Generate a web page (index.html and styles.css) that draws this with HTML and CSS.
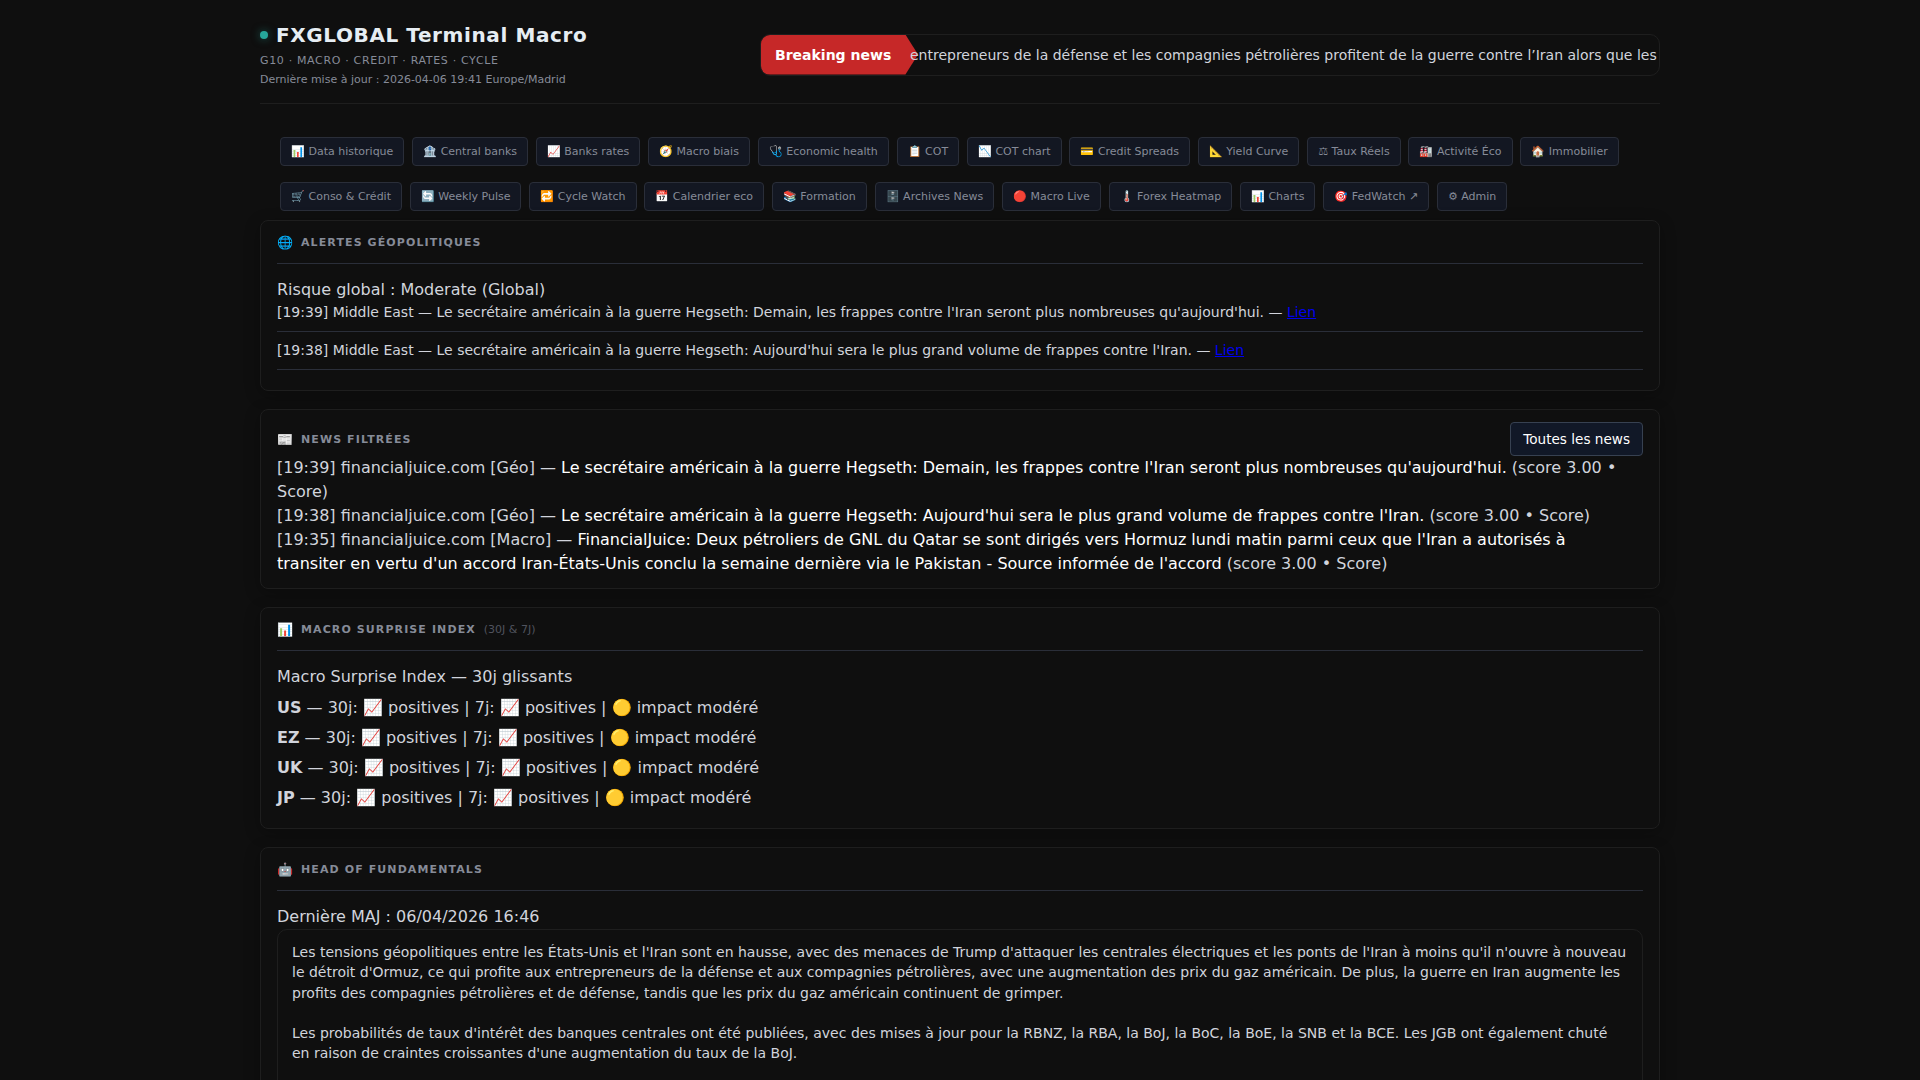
FILE: index.html
```html
<!DOCTYPE html>
<html lang="fr">
<head>
    <meta charset="UTF-8">
    <meta name="viewport" content="width=device-width, initial-scale=1.0">
    <title>FXGLOBAL Terminal Macro</title>
    <link rel="stylesheet" href="styles.css">
</head>
<body>
    <div class="container">
        <header class="header">
            <div class="brand">
                <h1><span class="dot"></span>FXGLOBAL Terminal Macro</h1>
                <p class="subtitle">G10 · MACRO · CREDIT · RATES · CYCLE</p>
                <p class="updated">Dernière mise à jour : 2026-04-06 19:41 Europe/Madrid</p>
            </div>
            <div class="ticker">
                <div class="ticker-label">Breaking news</div>
                <div class="ticker-text">entrepreneurs de la défense et les compagnies pétrolières profitent de la guerre contre l’Iran alors que les</div>
            </div>
        </header>

        <nav class="nav">
            <a href="#">📊 Data historique</a>
            <a href="#">🏦 Central banks</a>
            <a href="#">📈 Banks rates</a>
            <a href="#">🧭 Macro biais</a>
            <a href="#">🩺 Economic health</a>
            <a href="#">📋 COT</a>
            <a href="#">📉 COT chart</a>
            <a href="#">💳 Credit Spreads</a>
            <a href="#">📐 Yield Curve</a>
            <a href="#">⚖ Taux Réels</a>
            <a href="#">🏭 Activité Éco</a>
            <a href="#">🏠 Immobilier</a>
            <a href="#">🛒 Conso &amp; Crédit</a>
            <a href="#">🔄 Weekly Pulse</a>
            <a href="#">🔁 Cycle Watch</a>
            <a href="#">📅 Calendrier eco</a>
            <a href="#">📚 Formation</a>
            <a href="#">🗄️ Archives News</a>
            <a href="#">🔴 Macro Live</a>
            <a href="#">🌡️ Forex Heatmap</a>
            <a href="#">📊 Charts</a>
            <a href="#">🎯 FedWatch ↗</a>
            <a href="#">⚙ Admin</a>
        </nav>

        <main class="cards">
            <section class="card">
                <div class="card-head">
                    <span class="icon">🌐</span>
                    <h2>Alertes géopolitiques</h2>
                </div>
                <p>Risque global : Moderate (Global)</p>
                <ul class="alerts">
                    <li>[19:39] Middle East — Le secrétaire américain à la guerre Hegseth: Demain, les frappes contre l'Iran seront plus nombreuses qu'aujourd'hui. — <a href="#">Lien</a></li>
                    <li>[19:38] Middle East — Le secrétaire américain à la guerre Hegseth: Aujourd'hui sera le plus grand volume de frappes contre l'Iran. — <a href="#">Lien</a></li>
                </ul>
            </section>

            <section class="card">
                <div class="card-head plain">
                    <span class="icon">📰</span>
                    <h2>News filtrées</h2>
                    <button class="btn" type="button">Toutes les news</button>
                </div>
                <ul class="news">
                    <li>[19:39] financialjuice.com [Géo] — <a href="#">Le secrétaire américain à la guerre Hegseth: Demain, les frappes contre l'Iran seront plus nombreuses qu'aujourd'hui.</a> (score 3.00 • Score)</li>
                    <li>[19:38] financialjuice.com [Géo] — <a href="#">Le secrétaire américain à la guerre Hegseth: Aujourd'hui sera le plus grand volume de frappes contre l'Iran.</a> (score 3.00 • Score)</li>
                    <li>[19:35] financialjuice.com [Macro] — <a href="#">FinancialJuice: Deux pétroliers de GNL du Qatar se sont dirigés vers Hormuz lundi matin parmi ceux que l'Iran a autorisés à transiter en vertu d'un accord Iran-États-Unis conclu la semaine dernière via le Pakistan - Source informée de l'accord</a> (score 3.00 • Score)</li>
                </ul>
            </section>

            <section class="card">
                <div class="card-head">
                    <span class="icon">📊</span>
                    <h2>Macro Surprise Index</h2>
                    <span class="period">(30J &amp; 7J)</span>
                </div>
                <p>Macro Surprise Index — 30j glissants</p>
                <ul class="surprise">
                    <li><strong>US</strong> — 30j: 📈 positives | 7j: 📈 positives | 🟡 impact modéré</li>
                    <li><strong>EZ</strong> — 30j: 📈 positives | 7j: 📈 positives | 🟡 impact modéré</li>
                    <li><strong>UK</strong> — 30j: 📈 positives | 7j: 📈 positives | 🟡 impact modéré</li>
                    <li><strong>JP</strong> — 30j: 📈 positives | 7j: 📈 positives | 🟡 impact modéré</li>
                </ul>
            </section>

            <section class="card">
                <div class="card-head">
                    <span class="icon">🤖</span>
                    <h2>Head of Fundamentals</h2>
                </div>
                <p>Dernière MAJ : 06/04/2026 16:46</p>
                <div class="report">
                    <p>Les tensions géopolitiques entre les États-Unis et l'Iran sont en hausse, avec des menaces de Trump d'attaquer les centrales électriques et les ponts de l'Iran à moins qu'il n'ouvre à nouveau le détroit d'Ormuz, ce qui profite aux entrepreneurs de la défense et aux compagnies pétrolières, avec une augmentation des prix du gaz américain. De plus, la guerre en Iran augmente les profits des compagnies pétrolières et de défense, tandis que les prix du gaz américain continuent de grimper.</p>
                    <p>Les probabilités de taux d'intérêt des banques centrales ont été publiées, avec des mises à jour pour la RBNZ, la RBA, la BoJ, la BoC, la BoE, la SNB et la BCE. Les JGB ont également chuté en raison de craintes croissantes d'une augmentation du taux de la BoJ.</p>
                </div>
            </section>
        </main>
    </div>
</body>
</html>
```
FILE: styles.css
```css
* {
    margin: 0;
    padding: 0;
    box-sizing: border-box;
}
body {
    background-color: #0f0f0f;
    color: #d1d4dc;
    font-family: "DejaVu Sans", sans-serif;
    font-size: 16px;
    line-height: 1.5;
}
ul {
    list-style: none;
}
.container {
    max-width: 1440px;
    margin: 0 auto;
    padding: 20px;
}

/* Header */
.header {
    display: flex;
    justify-content: space-between;
    align-items: center;
    padding-bottom: 14px;
    border-bottom: 1px solid #1e1e1e;
}
.header h1 {
    display: flex;
    align-items: center;
    gap: 8px;
    margin-bottom: 1px;
    color: #e6edf3;
    font-size: 20px;
    line-height: 30px;
    letter-spacing: 0.03em;
}
.dot {
    width: 8px;
    height: 8px;
    border-radius: 50%;
    background-color: #26a69a;
    box-shadow: 0 0 8px rgba(38, 166, 154, 0.5);
}
.subtitle,
.updated {
    color: #868b98;
    font-size: 11px;
    line-height: 19px;
}
.subtitle {
    letter-spacing: 0.06em;
}
.ticker {
    display: flex;
    width: 900px;
    height: 42px;
    border: 1px solid #1e1e1e;
    border-radius: 10px;
    overflow: hidden;
    font-size: 14px;
    line-height: 40px;
}
.ticker-label {
    flex: none;
    width: 157px;
    padding-left: 14px;
    background-color: #c62828;
    color: #fff;
    font-weight: bold;
    clip-path: polygon(0 0, 92% 0, 100% 50%, 92% 100%, 0 100%);
}
.ticker-text {
    margin-left: -8px;
    white-space: nowrap;
    z-index: 1;
}

/* Navigation */
.nav {
    display: flex;
    flex-wrap: wrap;
    row-gap: 16px;
    column-gap: 0.65em;
    padding: 33px 20px 9px;
    font-size: 12px;
}
.nav a {
    padding: 5px 10px;
    background-color: #131722;
    border: 1px solid #2a2e39;
    border-radius: 4px;
    color: #868b98;
    font-size: 11px;
    line-height: 17px;
    text-decoration: none;
}

/* Cards */
.cards {
    display: flex;
    flex-direction: column;
    gap: 18px;
}
.card {
    padding: 12px 16px;
    background-color: #0f0f0f;
    border: 1px solid #1e1e1e;
    border-radius: 8px;
    box-shadow: 0 4px 16px rgba(0, 0, 0, 0.3);
}
.card-head {
    display: flex;
    align-items: center;
    gap: 8px;
    margin-bottom: 14px;
    padding-bottom: 11px;
    border-bottom: 1px solid #2a2e39;
    color: #868b98;
    font-size: 11px;
    line-height: 19px;
}
.card-head.plain {
    margin-bottom: 0;
    padding-bottom: 0;
    border-bottom: none;
}
.card-head h2 {
    font-size: 11px;
    letter-spacing: 0.1em;
    text-transform: uppercase;
}
.icon {
    font-size: 13px;
}
.period {
    color: #50535e;
}
.btn {
    margin-left: auto;
    padding: 8px 12px;
    background-color: #111827;
    border: 1px solid #374151;
    border-radius: 4px;
    color: #fff;
    font-family: inherit;
    font-size: 0.85rem;
    cursor: pointer;
}
.alerts li {
    margin-bottom: 8px;
    padding-bottom: 8px;
    border-bottom: 1px solid #2a2e39;
    font-size: 14px;
}
.alerts a {
    color: #0000ee;
}
.news {
    padding-right: 8px;
}
.news a {
    color: #fff;
    text-decoration: none;
}
.surprise {
    margin-top: 7px;
}
.surprise li {
    margin-bottom: 6px;
}
.report {
    min-height: 240px;
    padding: 12px 14px;
    border: 1px solid #1e1e1e;
    border-radius: 10px;
    font-size: 14px;
    line-height: 1.45;
}
.report p {
    margin-bottom: 20px;
}
```
